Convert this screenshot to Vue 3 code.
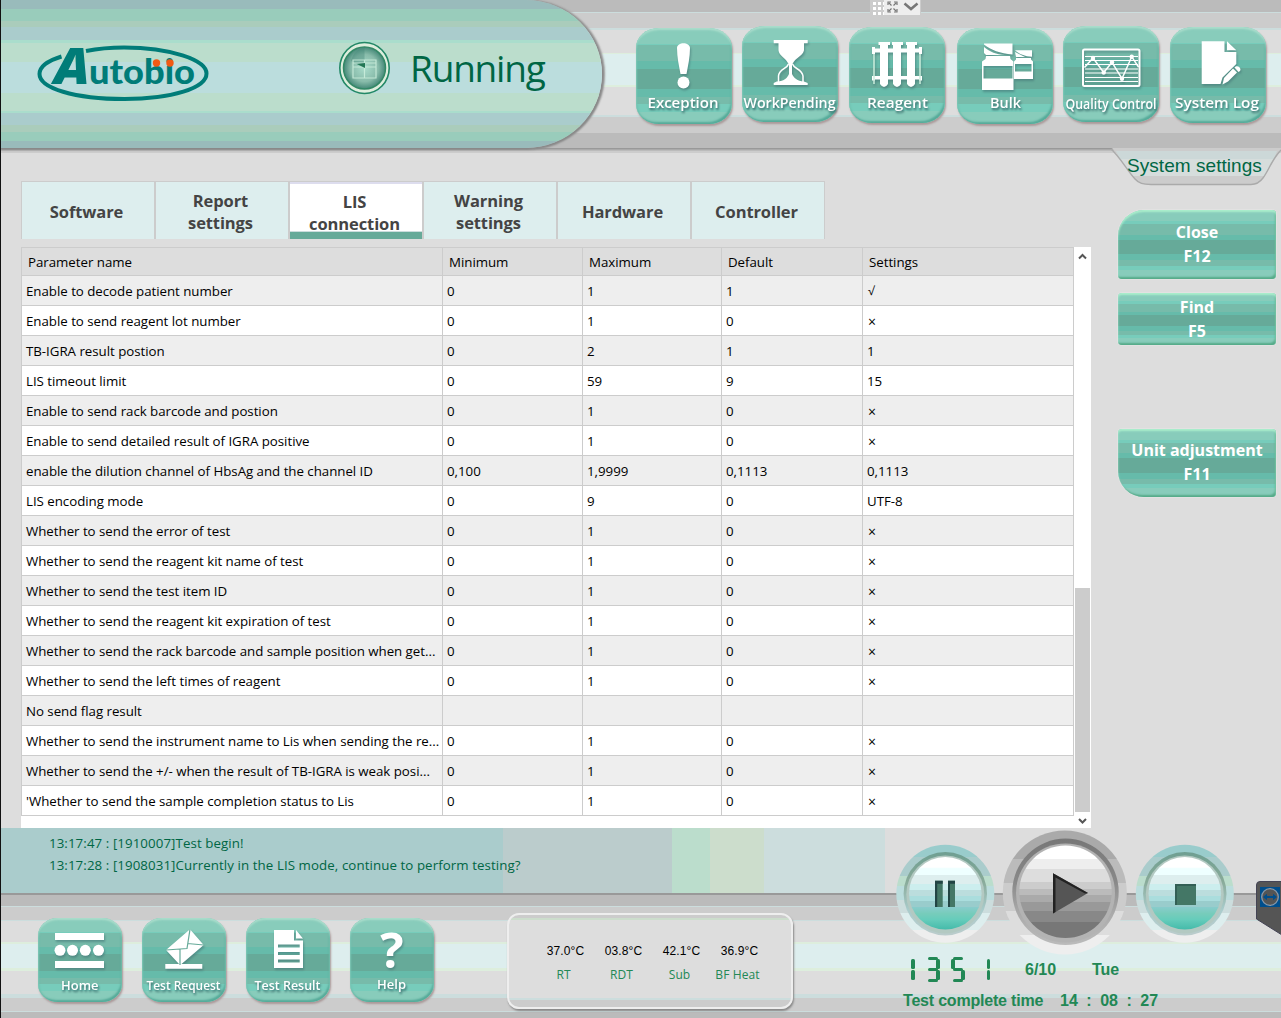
<script setup>
const topButtons = [
  { id: 'exception', label: 'Exception', y: 2, tx: 11.5, tw: 71, ty: 80 },
  { id: 'pending', label: 'WorkPending', y: 0, tx: 1.5, tw: 92, ty: 81.5 },
  { id: 'reagent', label: 'Reagent', y: 1, tx: 18, tw: 61, ty: 81 },
  { id: 'bulk', label: 'Bulk', y: 2, tx: 33, tw: 31, ty: 80 },
  { id: 'quality', label: 'Quality Control', y: 0, tx: 2.5, tw: 91, ty: 82.5 },
  { id: 'log', label: 'System Log', y: 1, tx: 5, tw: 84, ty: 80.5 },
]
const dockButtons = [
  { id: 'home', label: 'Home', tx: 23, tw: 37.5, ty: 71.5 },
  { id: 'request', label: 'Test Request', tx: 4.5, tw: 74, ty: 71.5 },
  { id: 'result', label: 'Test Result', tx: 8.5, tw: 66, ty: 71.5 },
  { id: 'help', label: 'Help', tx: 27, tw: 29, ty: 71 },
]
const tabs = ['Software', 'Report settings', 'LIS connection', 'Warning settings', 'Hardware', 'Controller']
const columns = ['Parameter name', 'Minimum', 'Maximum', 'Default', 'Settings']
const rows = [
  ['Enable to decode patient number', '0', '1', '1', '√'],
  ['Enable to send reagent lot number', '0', '1', '0', '×'],
  ['TB-IGRA result postion', '0', '2', '1', '1'],
  ['LIS timeout limit', '0', '59', '9', '15'],
  ['Enable to send rack barcode and postion', '0', '1', '0', '×'],
  ['Enable to send detailed result of IGRA positive', '0', '1', '0', '×'],
  ['enable the dilution channel of HbsAg and the channel ID', '0,100', '1,9999', '0,1113', '0,1113'],
  ['LIS encoding mode', '0', '9', '0', 'UTF-8'],
  ['Whether to send the error of test', '0', '1', '0', '×'],
  ['Whether to send the reagent kit name of test', '0', '1', '0', '×'],
  ['Whether to send the test item ID', '0', '1', '0', '×'],
  ['Whether to send the reagent kit expiration of test', '0', '1', '0', '×'],
  ['Whether to send the rack barcode and sample position when get...', '0', '1', '0', '×'],
  ['Whether to send the left times of reagent', '0', '1', '0', '×'],
  ['No send flag result', '', '', '', ''],
  ['Whether to send the instrument name to Lis when sending the re...', '0', '1', '0', '×'],
  ['Whether to send the +/- when the result of TB-IGRA is weak posi...', '0', '1', '0', '×'],
  ["'Whether to send the sample completion status to Lis", '0', '1', '0', '×'],
]
const logs = [
  '13:17:47 : [1910007]Test begin!',
  '13:17:28 : [1908031]Currently in the LIS mode, continue to perform testing?',
]
const temps = [
  ['37.0°C', 'RT'],
  ['03.8°C', 'RDT'],
  ['42.1°C', 'Sub'],
  ['36.9°C', 'BF Heat'],
]
// lit segments of each clock digit
const segments = { 1: 'bc', 3: 'abgcd', 5: 'afgcd' }
const clock = ['1', '3', '5', '1']
</script>

<template>
  <div class="app">
    <header class="header">
      <div class="capsule">
        <svg class="logo" width="172" height="62" viewBox="0 0 172 62">
          <path d="M24.500 13.500 C10 18 2.500 24 2.500 31 C2.500 45 37 56 87.500 56 C135 56 169.500 45 169.500 30.500 C169.500 17 133 4.500 87 4.500 C72 4.500 60 5.800 49 8" fill="none" stroke="#007c78" stroke-width="4" />
          <text class="logo-a" x="17" y="40.500" textLength="36" lengthAdjust="spacingAndGlyphs">A</text>
          <text class="logo-t" x="52" y="40.500" textLength="106" lengthAdjust="spacingAndGlyphs">utobio</text>
          <circle cx="119.500" cy="20" r="3.700" fill="#f15a14" />
          <circle cx="133" cy="20" r="3.700" fill="#f15a14" />
        </svg>
        <svg class="state-icon" width="52" height="54" viewBox="0 0 52 54">
          <defs>
            <radialGradient id="stateFill"><stop offset="0" stop-color="#aaddcc" /><stop offset=".65" stop-color="#88bbaa" /><stop offset="1" stop-color="#448877" /></radialGradient>
          </defs>
          <ellipse cx="25.500" cy="27" rx="24.700" ry="25.500" fill="#ddeedd" stroke="#228866" stroke-width="1.600" />
          <circle cx="25.500" cy="27" r="21" fill="url(#stateFill)" stroke="#338866" stroke-width="1.500" />
          <path d="M25.500 6 v21 L12 20 C14 12 19 8 25.500 6z" fill="#448877" opacity=".4" />
          <path d="M14 19 h23 v18 h-23z M14 22 h23 M14 26 h23 M25.500 19 v18" fill="none" stroke="#cceedd" stroke-width="1.200" opacity=".85" />
          <path d="M18 23 l8 -1 v5z" fill="#227755" />
        </svg>
        <span class="state">Running</span>
      </div>

      <nav class="top-nav">
        <button v-for="b in topButtons" :key="b.id" class="tile tile-lg" :style="{ marginTop: b.y + 'px' }">
          <svg width="96" height="96" viewBox="0 0 96 96">
            <g class="glyph">
              <template v-if="b.id === 'exception'">
                <path d="M41 20 C41 13.500 54 13.500 54 20 C54 29 52 38 50.500 46 H44.500 C43 38 41 29 41 20z" />
                <circle cx="47.500" cy="54.500" r="6" />
              </template>
              <template v-else-if="b.id === 'pending'">
                <path d="M31.700 14 h34 v3.300 h-3.700 v7 C61 30 53 32 50.500 38 h-4 C44 32 37 30 36.500 24.300 v-7 h-4.800z M31.700 59 v-2 l3 -1.500 C43 55 45 52 47 48 V37 h3 V48 C52 52 55 55 62 55.500 l3.700 1.500 v2z" />
                <path d="M46.500 38 C45 43 37 43 36.500 50 V56 M50.500 38 C52 43 60 43 61 50 V56" fill="none" stroke="#fff" stroke-width="1.500" />
              </template>
              <template v-else-if="b.id === 'reagent'">
                <path d="M29.500 15 h11.500 v3 h-2 v39 q-4 6 -8 0 V18 h-1.500z M43 15 h11 v3 h-2 v39 q-4 6 -8 0 V18 h-1z M57 15 h11 v3 h-2 v39 q-4 6 -8 0 V18 h-1z M23 20 h3 v1.500 h44 V20 h3 v7 h-3 v-1.500 H26 V27 h-3z M23 49 h50 v4.500 h-3 v-1 H26 v1 h-3z" />
                <path d="M25 27 v30 M71 27 v30" fill="none" stroke="#cceedd" stroke-width="1.500" />
              </template>
              <template v-else-if="b.id === 'bulk'">
                <path fill-rule="evenodd" d="M27 19 C33 24 39 26.500 48 27 H29 L27 25z M27 15.500 h28.500 v11 C43 25.500 34 22 27 16.500z M29 28 h24 l.500 3 l3 2.500 V62 H25 V33.500 l3.500 -2.500z M26.500 38 v12.500 H55.500 V38z" />
                <path fill-rule="evenodd" d="M58 22.200 h17 v6.500 C68 28.500 62 26 58 22.200z M58 24 L68 29 h-9z M59 30 h15 v1.500 l2 2 V51 H57 V33.500 l2 -2z M58 36 v7.500 h16.500 V36z" />
              </template>
              <template v-else-if="b.id === 'quality'">
                <g fill="none" stroke="#fff">
                  <rect x="20" y="23.500" width="56.500" height="36.500" rx="1.500" stroke-width="2" />
                  <path d="M22 30.500 h53 M22 34.500 h53 M22 38.500 h53 M22 43 h53 M22 47 h53 M22 51.500 h53 M22 55.500 h53" stroke-width="1.200" />
                  <path d="M21.500 41.500 L30 32 L40.700 46.500 L49 36.300 L59 52.700 L68.700 30.700 L75.500 41" stroke-width="1.500" />
                </g>
                <circle cx="30" cy="32" r="2.200" /><circle cx="40.700" cy="46.500" r="2.200" /><circle cx="49" cy="36.300" r="2.200" /><circle cx="59" cy="52.700" r="2.200" /><circle cx="68.700" cy="30.700" r="2.200" />
              </template>
              <template v-else>
                <path d="M31.700 14.300 H54.500 V25 H66.300 V37 L52.500 50.500 L50.500 57 H31.700z M57 14.300 L66.300 23.300 H57z" />
                <path d="M52.500 57.500 L54 51 L63 41.500 L67 45.500 L58 54.500z M64.500 40.500 C67 37.500 72 40.500 70 44 L68.500 45z" />
              </template>
            </g>
            <text class="tile-label lg" :x="b.tx" :y="b.ty" :textLength="b.tw" lengthAdjust="spacingAndGlyphs">{{ b.label }}</text>
          </svg>
        </button>
      </nav>

      <div class="remote-bar">
        <span class="grip"></span>
        <svg width="36" height="15" viewBox="0 0 36 15">
          <path d="M4 5 V2 h3 M10 2 h3 V5 M13 9 v3 h-3 M7 12 H4 V9 M5 3 l2.500 2.500 M12 3 L9.500 5.500 M12 11 L9.500 8.500 M5 11 l2.500 -2.500" fill="none" stroke="#777" stroke-width="1.200" />
          <path d="M20.500 3.500 l6.500 5.500 l6.500 -5.500" fill="none" stroke="#777" stroke-width="2.500" />
        </svg>
      </div>
    </header>

    <main class="main">
      <section class="content">
        <div class="tabs">
          <button v-for="t in tabs" :key="t" class="tab" :class="{ active: t === 'LIS connection' }"><span>{{ t }}</span></button>
        </div>
        <div class="grid-wrap">
          <div class="grid">
            <div class="row head">
              <span v-for="c in columns" :key="c">{{ c }}</span>
            </div>
            <div v-for="r in rows" :key="r[0]" class="row">
              <span v-for="(c, i) in r" :key="i" :class="{ mark: c === '×', tick: c === '√' }">{{ c }}</span>
            </div>
          </div>
          <div class="scroll">
            <svg width="17" height="17" viewBox="0 0 17 17"><path d="M5 11.500 L8.500 8 L12 11.500" fill="none" stroke="#555" stroke-width="2" /></svg>
            <div class="track"><div class="thumb"></div></div>
            <svg width="17" height="16" viewBox="0 0 17 16"><path d="M5 7 L8.500 10.500 L12 7" fill="none" stroke="#555" stroke-width="2" /></svg>
          </div>
        </div>
      </section>

      <aside class="side">
        <div class="page-title">
          <svg width="170" height="38" viewBox="0 0 170 38">
            <path d="M0 0 H170 V3 C161 14 158 22 152 30 C149 34 146 36.500 140 36.500 H40 C32 36.500 28 35.500 24 31 C16 22 9 9 1 0z" fill="#cccccc" />
            <path d="M5 3 H166 L163 11 H9z" fill="#ccd8d8" />
            <path d="M9 11 H163 L153 28 H20z" fill="#d6dddc" />
            <path d="M0 1 C9 9 16 22 24 31 C28 35.500 32 36.500 40 36.500 H140 C146 36.500 149 34 152 30 C158 22 161 11 170 2" fill="none" stroke="#aaa" stroke-width="1.400" />
          </svg>
          <h1>System settings</h1>
        </div>
        <button class="action close">Close<br />F12</button>
        <button class="action find">Find<br />F5</button>
        <button class="action unit">Unit adjustment<br />F11</button>
      </aside>
    </main>

    <div class="log">
      <p v-for="l in logs" :key="l">{{ l }}</p>
    </div>

    <footer class="dock">
      <nav class="dock-nav">
        <button v-for="b in dockButtons" :key="b.id" class="tile tile-sm">
          <svg width="84" height="84" viewBox="0 0 84 84">
            <g class="glyph">
              <template v-if="b.id === 'home'">
                <path d="M17 15 h49 v7 h-49z M17 43 h49 v7 h-49z" />
                <circle cx="22" cy="32.300" r="5.500" /><circle cx="34.500" cy="32.300" r="5.500" /><circle cx="47.300" cy="32.300" r="5.500" /><circle cx="60.500" cy="32.300" r="5.500" />
              </template>
              <template v-else-if="b.id === 'request'">
                <path d="M48 11.300 L61.700 27 L39.500 46 h20.800 v4.700 H23.300 V46 H37 L24 32z" />
                <path d="M24 32 L45 30.500 L48 11.300 M45.500 25.500 L61.700 27 M38 31 V47" fill="none" stroke="#66aa99" stroke-width="1.200" />
              </template>
              <template v-else-if="b.id === 'result'">
                <path fill-rule="evenodd" d="M28 12 H48 V22.500 H57 V50 H28z M50 12 L57 20.500 H50z M32 26.500 v3 h21.700 v-3z M32 34 v3 h21.700 v-3z M32 41.500 v3 h21.700 v-3z" />
              </template>
              <text v-else class="question" x="42" y="49.500">?</text>
            </g>
            <text class="tile-label" :x="b.tx" :y="b.ty" :textLength="b.tw" lengthAdjust="spacingAndGlyphs">{{ b.label }}</text>
          </svg>
        </button>
      </nav>

      <div class="temps">
        <div v-for="t in temps" :key="t[1]" class="temp">
          <span>{{ t[0] }}</span>
          <em>{{ t[1] }}</em>
        </div>
      </div>

      <div class="status">
        <div class="status-row">
          <div class="clock" role="img" aria-label="13:51">
            <div v-for="(d, i) in clock" :key="i" class="digit">
              <i v-for="s in segments[d]" :key="s" :class="'seg-' + s"></i>
            </div>
          </div>
          <span class="date">6/10</span>
          <span>Tue</span>
        </div>
        <div class="status-row done">
          <span class="done-label">Test complete time</span>
          <span>14</span><span>:</span><span>08</span><span>:</span><span>27</span>
        </div>
      </div>
    </footer>

    <div class="controls">
      <svg width="391" height="130" viewBox="890 827 391 130">
        <defs>
          <linearGradient id="rimGreen" x2="0" y2="1">
            <stop offset=".12" stop-color="#99cccc" /><stop offset=".12" stop-color="#aacccc" /><stop offset=".32" stop-color="#aacccc" /><stop offset=".32" stop-color="#bbddcc" /><stop offset=".42" stop-color="#bbddcc" /><stop offset=".42" stop-color="#bbdddd" /><stop offset=".56" stop-color="#bbdddd" /><stop offset=".56" stop-color="#ccdddd" /><stop offset=".7" stop-color="#ccdddd" /><stop offset=".7" stop-color="#ddeeee" /><stop offset=".87" stop-color="#ddeeee" /><stop offset=".87" stop-color="#eeeeee" />
          </linearGradient>
          <linearGradient id="wellGreen" x2="0" y2="1"><stop offset="0" stop-color="#6f9f92" /><stop offset=".35" stop-color="#88aa99" /><stop offset=".7" stop-color="#aacccc" /><stop offset="1" stop-color="#bbcccc" /></linearGradient>
          <linearGradient id="discGreen" x2="0" y2="1">
            <stop offset=".14" stop-color="#ffffff" /><stop offset=".16" stop-color="#eeffff" /><stop offset=".25" stop-color="#eeffff" /><stop offset=".25" stop-color="#ddeeee" /><stop offset=".37" stop-color="#ddeeee" /><stop offset=".37" stop-color="#cceeee" /><stop offset=".46" stop-color="#cceeee" /><stop offset=".46" stop-color="#bbdddd" /><stop offset=".54" stop-color="#bbdddd" /><stop offset=".54" stop-color="#aadddd" /><stop offset=".61" stop-color="#aadddd" /><stop offset=".61" stop-color="#99cccc" /><stop offset=".69" stop-color="#99cccc" /><stop offset=".69" stop-color="#88cccc" /><stop offset=".78" stop-color="#77ccbb" /><stop offset=".86" stop-color="#66ccbb" /><stop offset="1" stop-color="#44bbaa" />
          </linearGradient>
          <linearGradient id="rimGrey" x2="0" y2="1">
            <stop offset=".23" stop-color="#aaaaaa" /><stop offset=".23" stop-color="#bbbbbb" /><stop offset=".42" stop-color="#bbbbbb" /><stop offset=".42" stop-color="#cccccc" /><stop offset=".65" stop-color="#cccccc" /><stop offset=".65" stop-color="#dddddd" /><stop offset=".84" stop-color="#dddddd" /><stop offset=".84" stop-color="#eeeeee" />
          </linearGradient>
          <linearGradient id="wellGrey" x2="0" y2="1"><stop offset="0" stop-color="#777777" /><stop offset=".4" stop-color="#888888" /><stop offset=".7" stop-color="#aaaaaa" /><stop offset="1" stop-color="#bbbbbb" /></linearGradient>
          <linearGradient id="discGrey" x2="0" y2="1">
            <stop offset=".14" stop-color="#ffffff" /><stop offset=".14" stop-color="#eeeeee" /><stop offset=".25" stop-color="#eeeeee" /><stop offset=".25" stop-color="#dddddd" /><stop offset=".39" stop-color="#dddddd" /><stop offset=".39" stop-color="#cccccc" /><stop offset=".47" stop-color="#cccccc" /><stop offset=".47" stop-color="#bbbbbb" /><stop offset=".54" stop-color="#bbbbbb" /><stop offset=".54" stop-color="#aaaaaa" /><stop offset=".61" stop-color="#aaaaaa" /><stop offset=".61" stop-color="#999999" /><stop offset=".71" stop-color="#999999" /><stop offset=".71" stop-color="#888888" /><stop offset=".83" stop-color="#888888" /><stop offset=".83" stop-color="#777777" />
          </linearGradient>
        </defs>
        <g v-for="cx in [945.3, 1184.8]" :key="cx">
          <circle :cx="cx" cy="893.800" r="49" fill="url(#rimGreen)" />
          <circle :cx="cx" cy="893.800" r="41.700" fill="url(#wellGreen)" />
          <circle :cx="cx" cy="894.500" r="39" fill="#b3c9c2" />
          <circle :cx="cx" cy="893.300" r="36.300" fill="url(#discGreen)" />
        </g>
        <circle cx="1064.800" cy="892.500" r="62" fill="url(#rimGrey)" />
        <circle cx="1065.500" cy="891.800" r="53.200" fill="url(#wellGrey)" />
        <circle cx="1065.500" cy="893" r="49.500" fill="#b3b3b3" />
        <circle cx="1065.500" cy="891.800" r="46.200" fill="url(#discGrey)" />
        <path d="M935 880.700 h7.700 V907 H935z M948 880.700 h7 V907 h-7z" fill="#447766" />
        <path d="M935 907 v-26.300 h7.700 v3 h-5.500 V907z M948 907 v-26.300 h7 v3 h-5 V907z" fill="#224444" />
        <path d="M1053 873.300 L1088 893 L1053 913.500z" fill="#555" />
        <path d="M1053 873.300 L1088 893 L1085 893.500 L1055.500 877.500 V912 L1053 913.500z" fill="#222" />
        <path d="M1175 884 h21 v21 h-21z" fill="#447766" />
        <path d="M1175 884 h21 v2 h-19 V905 h-2z" fill="#335f55" />
        <path d="M1256.500 885 Q1256.500 881.500 1260 881.500 H1282 V935 L1256.500 919z" fill="#555" stroke="#444455" stroke-width="1" />
        <rect x="1260" y="887" width="20" height="20" fill="#004e8c" />
        <circle cx="1270" cy="897" r="8.300" fill="#555" stroke="#8899aa" stroke-width="1.300" />
        <path d="M1263 897 l4 -3.300 v2.300 h6 v-2.300 l4 3.300 l-4 3.300 V898 h-6 v2.300z" fill="#004e8c" />
      </svg>
    </div>
  </div>
</template>

<style>
body {
  margin: 0;
  background: #ddd;
}
</style>

<style scoped>
* {
  box-sizing: border-box;
}
.app {
  position: relative;
  display: flex;
  flex-direction: column;
  width: 1281px;
  height: 1018px;
  overflow: hidden;
  border-left: 1px solid #111;
  background: #ddd;
  font-family: 'Open Sans', 'Noto Sans', sans-serif;
  color: #000;
}
button {
  margin: 0;
  padding: 0;
  border: 0;
  font-family: inherit;
}
svg {
  display: block;
  overflow: visible;
}
.header {
  position: relative;
  display: flex;
  flex: none;
  height: 153px;
  background: linear-gradient(#bbb 12px, #cdd 12px 13px, #ccc 13px 28px, #cdd 28px 30px, #ddd 30px 53px, #ded 53px 54px, #dee 54px 85px, #ded 85px 87px, #ddd 87px 115px, #cdd 115px 117px, #ccc 117px 133px, #bbb 133px 148px, #999 148px 149px, #aaa 149px 150px, #bbb 150px 151px, #ccc 151px 153px);
}
.capsule {
  display: flex;
  width: 601px;
  height: 148px;
  border-radius: 0 76px 76px 0 / 0 74px 74px 0;
  box-shadow: 1px 1px 2px 1px #888, 3px 0 2px #aaa;
  background: linear-gradient(#9bb 9px, #9cb 9px 21px, #acb 21px 27px, #acc 27px 40px, #adc 40px 43px, #bdc 43px 62px, #bdd 62px 93px, #bdc 93px 111px, #adc 111px 113px, #acc 113px 125px, #acb 125px 132px, #9cb 132px 141px, #9bb 141px);
}
.logo {
  flex: none;
  margin: 42.5px 0 0 36px;
}
.logo-a {
  font: italic 800 50px 'Open Sans', sans-serif;
  fill: #007c78;
}
.logo-t {
  font: 900 34px Lato, sans-serif;
  fill: #007c78;
}
.state-icon {
  flex: none;
  margin: 41px 0 0 130px;
}
.state {
  margin: 43px 0 0 19px;
  font-size: 37px;
  line-height: 50px;
  letter-spacing: -1.2px;
  color: #064;
}
.top-nav {
  display: grid;
  grid-template-columns: 106px 107px 108px 106px 106.500px 96px;
  align-items: start;
  margin: 26px 0 0 34px;
}
.tile {
  background: linear-gradient(#8cb 16.5%, #7cb 16.5% 18%, #7ba 18% 34.5%, #6ba 34.5% 43%, #6a9 43% 63.5%, #6ba 63.5% 72%, #7ba 72% 79%, #7cb 79% 87%, #8cb 87%);
  box-shadow: inset 0 2px 2px #aaddcc, inset -2px -3px 2px -1px #5a9, inset 2px 0 2px -1px #6ba, 1px 2px 2px #a99;
}
.tile-lg {
  width: 96px;
  height: 96px;
  border-radius: 23px / 20px;
}
.tile-sm {
  width: 84px;
  height: 84px;
  border-radius: 20px / 18px;
}
.glyph {
  fill: #fff;
  filter: drop-shadow(1px 2px 1px #4779);
}
.tile-label {
  font: 600 13px 'Open Sans', sans-serif;
  fill: #fff;
  filter: drop-shadow(1px 2px 1px #366);
}
.tile-label.lg {
  font-size: 15px;
}
.question {
  font: 700 49px 'Open Sans', sans-serif;
  text-anchor: middle;
}
.remote-bar {
  position: absolute;
  left: 869px;
  top: 0;
  display: flex;
  width: 51px;
  height: 16px;
  border: 1px solid #ccc;
  border-top: 0;
  background: #eee;
}
.grip {
  width: 13px;
  height: 15px;
  background: repeating-linear-gradient(90deg, #ccc 0 2px, transparent 2px 5px), repeating-linear-gradient(#ccc 0 2px, #fff 2px 5px);
}
.main {
  display: flex;
  flex: none;
  height: 675px;
}
.content {
  width: 1090px;
  padding: 28px 0 0 20px;
}
.tabs {
  display: flex;
  width: 804px;
  height: 58px;
  margin-bottom: 8px;
  border: 1px solid #ccc;
  border-width: 1px 1px 0;
}
.tab {
  display: flex;
  flex: 1 1 0;
  align-items: center;
  justify-content: center;
  padding: 2px 22px 0 19px;
  border-left: 2px solid #ccc;
  background: #dee;
  font-size: 16.5px;
  font-weight: 700;
  line-height: 22px;
  letter-spacing: -0.1px;
  color: #444;
}
.tab:first-child {
  border-left: 0;
}
.tab.active {
  align-items: flex-start;
  padding-top: 9px;
  background: linear-gradient(#dde 2px, #fff 2px 49px, #cdd 49px 50px, #6a9 50px);
}
.grid-wrap {
  display: flex;
  width: 1070px;
  height: 581px;
  background: #fff;
}
.grid {
  width: 1053px;
}
.row {
  display: grid;
  grid-template-columns: 421px 140px 139px 141px 211px;
  height: 30px;
  border: 1px solid #ccc;
  border-width: 0 0 1px 1px;
  background: #fff;
  font-size: 13.3px;
  line-height: 30px;
}
.row:nth-child(even) {
  background: #eee;
}
.row span {
  padding-left: 4px;
  border-right: 1px solid #ccc;
  letter-spacing: -0.03px;
  white-space: pre;
  overflow: hidden;
}
.row.head {
  height: 29px;
  border-top-width: 1px;
  background: #ddd;
  line-height: 28px;
}
.row.head span {
  padding-left: 6px;
}
.row span.mark {
  padding-left: 5px;
  font-size: 14px;
  line-height: 31px;
}
.row span.tick {
  padding-left: 5px;
  font-size: 12px;
}
.scroll {
  display: flex;
  flex-direction: column;
  width: 17px;
}
.track {
  display: flex;
  flex: 1;
  align-items: flex-end;
  justify-content: center;
}
.thumb {
  width: 15px;
  height: 224px;
  background: #ccc;
}
.side {
  display: flex;
  flex-direction: column;
  width: 170px;
  margin: -5px 0 0 20px;
  position: relative;
}
.page-title {
  display: grid;
  height: 38px;
}
.page-title > * {
  grid-area: 1 / 1;
}
.page-title h1 {
  margin: 5px 0 0 16px;
  font: 400 19px/26px 'Liberation Sans', Arial, sans-serif;
  letter-spacing: 0.05px;
  white-space: nowrap;
  color: #064;
}
.action {
  width: 158px;
  margin-left: 7px;
  padding-bottom: 2px;
  background: linear-gradient(#8cb 16%, #7cb 16% 21%, #7ba 21% 36%, #6ba 36% 43%, #6a9 43% 64%, #6ba 64% 73%, #7ba 73% 81%, #7cb 81% 87%, #8cb 87%);
  box-shadow: inset 0 2px 2px #aec, inset -2px -3px 2px -1px #5a8, 0 0 0 1px #e2e2e2;
  font-size: 16px;
  font-weight: 700;
  line-height: 24px;
  color: #fff;
}
.close {
  height: 69px;
  margin-top: 24px;
  border-radius: 26px 4px 4px 4px;
}
.find {
  height: 52px;
  margin-top: 14px;
  padding-bottom: 0;
  border-radius: 4px;
}
.unit {
  height: 68px;
  margin-top: 84px;
  border-radius: 4px 4px 4px 26px;
}
.log {
  flex: none;
  height: 65px;
  padding: 4px 0 0 48px;
  background: linear-gradient(90deg, #acc 502px, #bcc 502px 671px, #bdc 671px 709px, #cdc 709px 763px, #cdd 763px 884px, #ddd 884px);
}
.log p {
  margin: 0;
  font-size: 13.3px;
  line-height: 22px;
  letter-spacing: 0.08px;
  color: #064;
}
.dock {
  display: flex;
  flex: none;
  height: 125px;
  background: linear-gradient(#999 2px, #bbb 2px 13px, #cdd 13px 14px, #ccc 14px 27px, #cdd 27px 28px, #ddd 28px 49px, #ded 49px 51px, #dee 51px 75px, #ded 75px 78px, #ddd 78px 101px, #cdd 101px 105px, #ccc 105px 118px, #cdd 118px 119px, #bbb 119px);
}
.dock-nav {
  display: flex;
  gap: 20px;
  margin: 25px 0 0 37px;
}
.temps {
  display: grid;
  grid-template-columns: repeat(4, 58px);
  align-content: start;
  justify-content: center;
  width: 286px;
  height: 96px;
  margin: 20px 0 0 73px;
  padding: 24px 0 0 5px;
  border: 2px solid #eee;
  border-radius: 12px;
  background: linear-gradient(#ccc 3px, #cdc 3px 5px, #ddd 5px 83px, #cdd 83px 85px, #ccc 85px) padding-box;
  box-shadow: 1px 2px 2px #888;
}
.temp {
  display: flex;
  flex-direction: column;
  align-items: center;
  font: 12px/24px 'Liberation Sans', Arial, sans-serif;
  letter-spacing: 0.1px;
}
.temp em {
  margin-left: -4px;
  font: 12px/24px 'Open Sans', sans-serif;
  white-space: nowrap;
  color: #285;
}
.status {
  display: flex;
  flex-direction: column;
  margin: 64px 0 0 110px;
  font: 700 16px/26px 'Liberation Sans', Arial, sans-serif;
  color: #285;
}
.status-row {
  display: flex;
  height: 32px;
}
.clock {
  display: flex;
  gap: 11.7px;
  width: 124px;
  margin-left: -2px;
}
.digit {
  position: relative;
  width: 13.500px;
  height: 25px;
}
.digit i {
  position: absolute;
  background: #285;
  border-radius: 1.5px;
}
.seg-a, .seg-g, .seg-d {
  left: 2px;
  width: 9.500px;
  height: 3px;
}
.seg-a { top: 0; }
.seg-g { top: 11px; }
.seg-d { top: 22px; }
.seg-b, .seg-c {
  right: 0;
  width: 3.500px;
  height: 9.500px;
}
.seg-f {
  left: 0;
  width: 3.500px;
  height: 9.500px;
}
.seg-b, .seg-f { top: 2px; }
.seg-c { top: 13px; }
.date {
  width: 67px;
}
.done span {
  margin-right: 8.500px;
}
.done .done-label {
  width: 148.5px;
  letter-spacing: -0.2px;
  white-space: nowrap;
}
.controls {
  position: absolute;
  left: 889px;
  top: 827px;
}
</style>
